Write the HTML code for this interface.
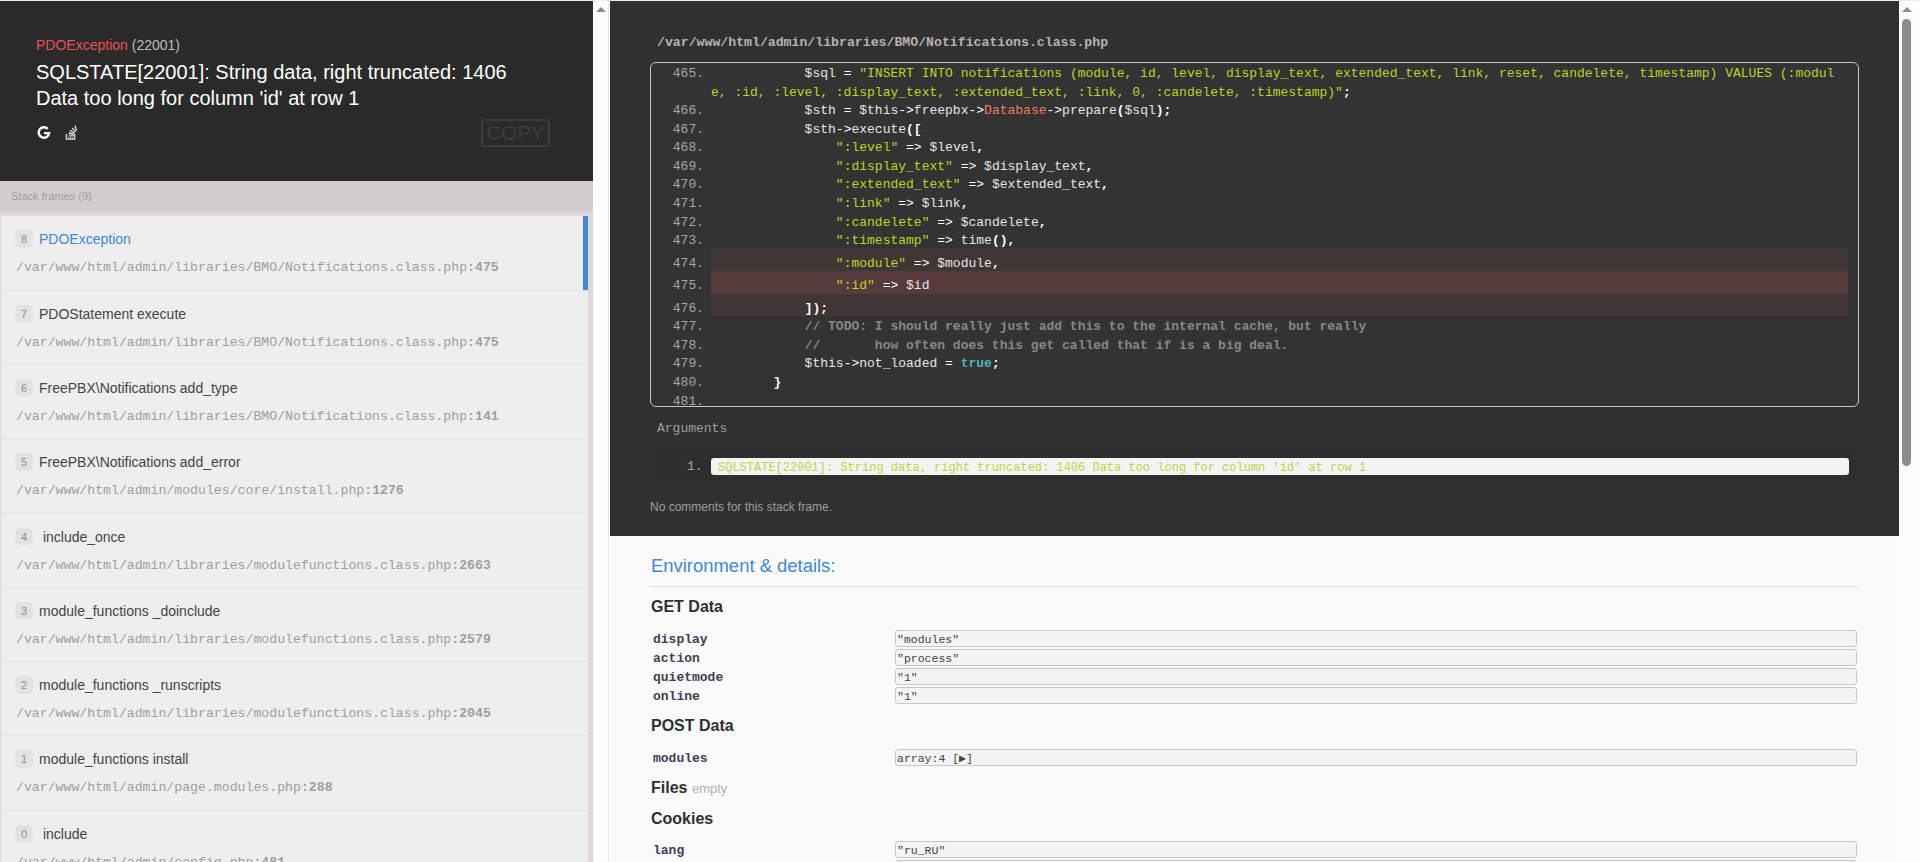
<!DOCTYPE html>
<html><head><meta charset="utf-8">
<style>
*{box-sizing:border-box}
html,body{margin:0;padding:0;width:1920px;height:862px;overflow:hidden;background:#fff;font-family:"Liberation Sans",sans-serif;color:#131313}
.topline{position:absolute;left:0;top:0;width:1920px;height:1px;background:#ececec}
.left{position:absolute;left:0;top:1px;width:593px;height:861px;background:#ded8d8;overflow:hidden}
header{position:absolute;left:0;top:0;width:593px;height:180px;background:#2a2a2a;color:#fff}
.exc-title{position:absolute;left:36px;top:36px;font-size:14px;line-height:16px;color:#bebebe;white-space:nowrap}
.exc-title .p{color:#e95353}
.exc-msg{position:absolute;left:36px;top:58px;font-size:20px;line-height:26px;color:#fff;white-space:nowrap}
.ico{position:absolute}
.copy{position:absolute;left:481px;top:118px;width:69px;height:28px;border-radius:3px;box-shadow:inset 0 0 0 2px #3c3c3c;color:#3c3c3c;font-size:20.4px;line-height:28px;text-align:center;font-weight:normal}
.fdesc{position:absolute;left:0;top:180px;width:593px;height:30px;background:#d3cdcd;color:#a29d9d;font-size:11px;line-height:30px;padding-left:11px}
.frames{position:absolute;left:1px;top:214.5px;width:587px}
.frame{position:relative;height:74.29px;background:#eeeeee;border-bottom:1px solid #e2e2e2}
.frame.active{box-shadow:inset -5px 0 0 0 #4288CE;height:75.2px}
.frame.active .fi,.frame.active .fn{margin-top:0.5px}
.fi{position:absolute;left:14px;top:14px;width:18px;height:17.5px;border-radius:5px;background:#e2e2e2;color:#8f8a8a;font-size:11px;line-height:18px;text-align:center}
.fn{position:absolute;left:38px;top:14px;font-size:14px;line-height:18px;color:#444;white-space:nowrap}
.active .fn{color:#4288CE}
.ff{position:absolute;left:15px;top:44px;font-family:"Liberation Mono",monospace;font-size:13.2px;line-height:16px;color:#a29d9d;white-space:nowrap}
.ff b{font-weight:bold}
.sb1{position:absolute;left:593px;top:1px;width:15px;height:861px;background:#fcfcfc}
.sb1line{position:absolute;left:608px;top:1px;width:1px;height:861px;background:#e6e6e6}
.tri{position:absolute;width:0;height:0;border-left:5px solid transparent;border-right:5px solid transparent;border-bottom:5px solid #8c8c8c}
.right{position:absolute;left:610px;top:1px;width:1289px;height:861px;background:#fafafa;overflow:hidden}
.fcode{position:absolute;left:0;top:0;width:1289px;height:535px;background:#303030}
.fpath{position:absolute;left:47px;top:34px;font-family:"Liberation Mono",monospace;font-size:13.2px;line-height:16px;color:#b8b2b2;font-weight:bold;white-space:nowrap}
.cblock{position:absolute;left:40px;top:61px;width:1209px;height:345px;border:1px solid #c8c8c8;border-radius:6px;background:#333;overflow:hidden}
.code{position:absolute;left:0;top:0;width:100%;font-family:"Liberation Mono",monospace;font-size:13px;color:#e9e4e5}
.ln{position:relative;height:18.57px;line-height:18.57px;white-space:pre}
.ln.cur{height:22.57px}
.cur .hl{background:rgba(255,100,100,.07)}
.act .hl{background:rgba(255,100,100,.17)}
.ln .n{position:absolute;left:0;top:2px;width:53px;text-align:right;color:#a5a5a5}
.ln .t{position:absolute;left:60px;right:10px;top:2px}
.cur .t,.cur .n{top:6px}
.cur .hl{position:absolute;left:60px;right:10px;top:0;bottom:0}
.s{color:#BCD42A}
.k{color:#4bb1b1;font-weight:bold}
.c{color:#888;font-weight:bold}
.y{color:#ef7c61}
.u{color:#fff;font-weight:bold}
.o{color:#fff}
.args-t{position:absolute;left:47px;top:420px;font-family:"Liberation Mono",monospace;font-size:13px;line-height:16px;color:#a29d9d;white-space:nowrap}
.args{position:absolute;left:39px;top:447px;width:1210px;height:37px;background:#2e2e2e;border-radius:6px}
.args .n{position:absolute;left:38px;top:11px;font-family:"Liberation Mono",monospace;font-size:13px;line-height:16px;color:#a5a5a5}
.args .v{position:absolute;left:62px;top:10px;width:1138px;height:17px;background:#f3f3f3;border-radius:3px;font-family:"Liberation Mono",monospace;font-size:12px;line-height:17px;padding-top:2px;color:#bfd44a;padding-left:7px;white-space:nowrap}
.nocom{position:absolute;left:40px;top:498px;font-size:12px;line-height:16px;color:#a29d9d;white-space:nowrap}
.dh{position:absolute;left:41px;top:554px;font-size:18.45px;line-height:22px;color:#4288CE;white-space:nowrap}
.dline{position:absolute;left:40px;top:585px;width:1209px;height:1px;background:#e1e1e1}
.lbl{position:absolute;left:41px;font-size:16px;font-weight:bold;color:#303030;line-height:18px;white-space:nowrap}
.lbl span{font-size:13px;font-weight:normal;color:#b3b3b3}
.key{position:absolute;left:43px;margin-top:2px;font-family:"Liberation Mono",monospace;font-size:13px;font-weight:bold;color:#463C54;line-height:16px;white-space:nowrap}
.val{position:absolute;left:285px;width:962px;height:17px;padding-top:1px;border:1px solid #c8c8c8;border-radius:3px;background:#f4f4f4;font-family:"Liberation Mono",monospace;font-size:11.5px;line-height:15px;color:#444;padding-left:1px;white-space:nowrap}
.sb2{position:absolute;left:1899px;top:1px;width:16px;height:861px;background:#fcfcfc}
.thumb{position:absolute;left:1902px;top:19px;width:9px;height:447px;border-radius:5px;background:#8c8c8c}
.edge{position:absolute;left:1915px;top:1px;width:5px;height:861px;background:#fff}
</style></head><body>
<div class="topline"></div>
<div class="left">
 <header>
  <div class="exc-title"><span class="p">PDOException</span> (22001)</div>
  <div class="exc-msg">SQLSTATE[22001]: String data, right truncated: 1406<br>Data too long for column 'id' at row 1</div>
  <svg class="ico" style="left:37px;top:123.6px" width="14" height="15" viewBox="0 0 14 15"><path d="M10.7 3.9 A5.2 5.2 0 1 0 12.1 8.1 H7" fill="none" stroke="#fff" stroke-width="2.4"/></svg>
  <svg class="ico" style="left:65px;top:122.5px" width="13" height="16" viewBox="0 0 13 16"><g fill="none" stroke="#fff" stroke-width="1.2"><path d="M1.3 9.9 V15 H9.7 V9.9" stroke-width="1.3" stroke="#d8d8d8"/><path d="M3 13 H8.3" stroke="#aaa"/><path d="M3.1 11 L8.5 11.7" stroke="#c4c4c4"/><path d="M3.7 8.8 L9 10.3"/><path d="M5.1 6.5 L9.7 9"/><path d="M7.2 4.2 L10.7 7.7"/><path d="M9.9 1.6 L11.5 6.5"/></g></svg>
  <div class="copy">COPY</div>
 </header>
 <div class="fdesc">Stack frames (9)</div>
 <div class="frames">
  <div class="frame active"><div class="fi">8</div><div class="fn">PDOException</div><div class="ff">/var/www/html/admin/libraries/BMO/Notifications.class.php<b>:475</b></div></div>
  <div class="frame"><div class="fi">7</div><div class="fn">PDOStatement execute</div><div class="ff">/var/www/html/admin/libraries/BMO/Notifications.class.php<b>:475</b></div></div>
  <div class="frame"><div class="fi">6</div><div class="fn">FreePBX\Notifications add_type</div><div class="ff">/var/www/html/admin/libraries/BMO/Notifications.class.php<b>:141</b></div></div>
  <div class="frame"><div class="fi">5</div><div class="fn">FreePBX\Notifications add_error</div><div class="ff">/var/www/html/admin/modules/core/install.php<b>:1276</b></div></div>
  <div class="frame"><div class="fi">4</div><div class="fn">&nbsp;include_once</div><div class="ff">/var/www/html/admin/libraries/modulefunctions.class.php<b>:2663</b></div></div>
  <div class="frame"><div class="fi">3</div><div class="fn">module_functions _doinclude</div><div class="ff">/var/www/html/admin/libraries/modulefunctions.class.php<b>:2579</b></div></div>
  <div class="frame"><div class="fi">2</div><div class="fn">module_functions _runscripts</div><div class="ff">/var/www/html/admin/libraries/modulefunctions.class.php<b>:2045</b></div></div>
  <div class="frame"><div class="fi">1</div><div class="fn">module_functions install</div><div class="ff">/var/www/html/admin/page.modules.php<b>:288</b></div></div>
  <div class="frame"><div class="fi">0</div><div class="fn">&nbsp;include</div><div class="ff">/var/www/html/admin/config.php<b>:481</b></div></div>
 </div>
</div>
<div class="sb1"></div><div class="sb1line"></div>
<div class="tri" style="left:596px;top:7px"></div>
<div class="right">
 <div class="fcode">
  <div class="fpath">/var/www/html/admin/libraries/BMO/Notifications.class.php</div>
  <div class="cblock"><div class="code" id="code"><div class="ln " style="height:37.14px"><span class="n">465.</span><span class="t">            $sql <span class="o">=</span> <span class="s">&quot;INSERT INTO notifications (module, id, level, display_text, extended_text, link, reset, candelete, timestamp) VALUES (:modul</span>
<span class="s">e, :id, :level, :display_text, :extended_text, :link, 0, :candelete, :timestamp)&quot;</span><span class="u">;</span></span></div>
<div class="ln "><span class="n">466.</span><span class="t">            $sth <span class="o">=</span> $this<span class="o">-&gt;</span>freepbx<span class="o">-&gt;</span><span class="y">Database</span><span class="o">-&gt;</span>prepare<span class="u">(</span>$sql<span class="u">);</span></span></div>
<div class="ln "><span class="n">467.</span><span class="t">            $sth<span class="o">-&gt;</span>execute<span class="u">([</span></span></div>
<div class="ln "><span class="n">468.</span><span class="t">                <span class="s">&quot;:level&quot;</span> <span class="o">=&gt;</span> $level<span class="u">,</span></span></div>
<div class="ln "><span class="n">469.</span><span class="t">                <span class="s">&quot;:display_text&quot;</span> <span class="o">=&gt;</span> $display_text<span class="u">,</span></span></div>
<div class="ln "><span class="n">470.</span><span class="t">                <span class="s">&quot;:extended_text&quot;</span> <span class="o">=&gt;</span> $extended_text<span class="u">,</span></span></div>
<div class="ln "><span class="n">471.</span><span class="t">                <span class="s">&quot;:link&quot;</span> <span class="o">=&gt;</span> $link<span class="u">,</span></span></div>
<div class="ln "><span class="n">472.</span><span class="t">                <span class="s">&quot;:candelete&quot;</span> <span class="o">=&gt;</span> $candelete<span class="u">,</span></span></div>
<div class="ln "><span class="n">473.</span><span class="t">                <span class="s">&quot;:timestamp&quot;</span> <span class="o">=&gt;</span> time<span class="u">(),</span></span></div>
<div class="ln cur"><span class="hl"></span><span class="n">474.</span><span class="t">                <span class="s">&quot;:module&quot;</span> <span class="o">=&gt;</span> $module<span class="u">,</span></span></div>
<div class="ln cur act"><span class="hl"></span><span class="n">475.</span><span class="t">                <span class="s">&quot;:id&quot;</span> <span class="o">=&gt;</span> $id</span></div>
<div class="ln cur"><span class="hl"></span><span class="n">476.</span><span class="t">            <span class="u">]);</span></span></div>
<div class="ln "><span class="n">477.</span><span class="t">            <span class="c">// TODO: I should really just add this to the internal cache, but really</span></span></div>
<div class="ln "><span class="n">478.</span><span class="t">            <span class="c">//       how often does this get called that if is a big deal.</span></span></div>
<div class="ln "><span class="n">479.</span><span class="t">            $this<span class="o">-&gt;</span>not_loaded <span class="o">=</span> <span class="k">true</span><span class="u">;</span></span></div>
<div class="ln "><span class="n">480.</span><span class="t">        <span class="u">}</span></span></div>
<div class="ln "><span class="n">481.</span><span class="t"></span></div></div></div>
  <div class="args-t">Arguments</div>
  <div class="args"><div class="n">1.</div><div class="v">SQLSTATE[22001]: String data, right truncated: 1406 Data too long for column 'id' at row 1</div></div>
  <div class="nocom">No comments for this stack frame.</div>
 </div>
 <div class="dh">Environment &amp; details:</div>
 <div class="dline"></div>
 <div class="lbl" style="top:597px">GET Data</div>
 <div class="key" style="top:629px">display</div><div class="val" style="top:629px">"modules"</div>
 <div class="key" style="top:648px">action</div><div class="val" style="top:648px">"process"</div>
 <div class="key" style="top:667px">quietmode</div><div class="val" style="top:667px">"1"</div>
 <div class="key" style="top:686px">online</div><div class="val" style="top:686px">"1"</div>
 <div class="lbl" style="top:716px">POST Data</div>
 <div class="key" style="top:748px">modules</div><div class="val" style="top:748px">array:4 [&#9654;]</div>
 <div class="lbl" style="top:778px">Files <span>empty</span></div>
 <div class="lbl" style="top:809px">Cookies</div>
 <div class="key" style="top:840px">lang</div><div class="val" style="top:840px">"ru_RU"</div>
 <div class="val" style="top:859px"></div>
</div>
<div class="sb2"></div>
<div class="tri" style="left:1902px;top:7px"></div>
<div class="thumb"></div>
<div class="edge"></div>
</body></html>
